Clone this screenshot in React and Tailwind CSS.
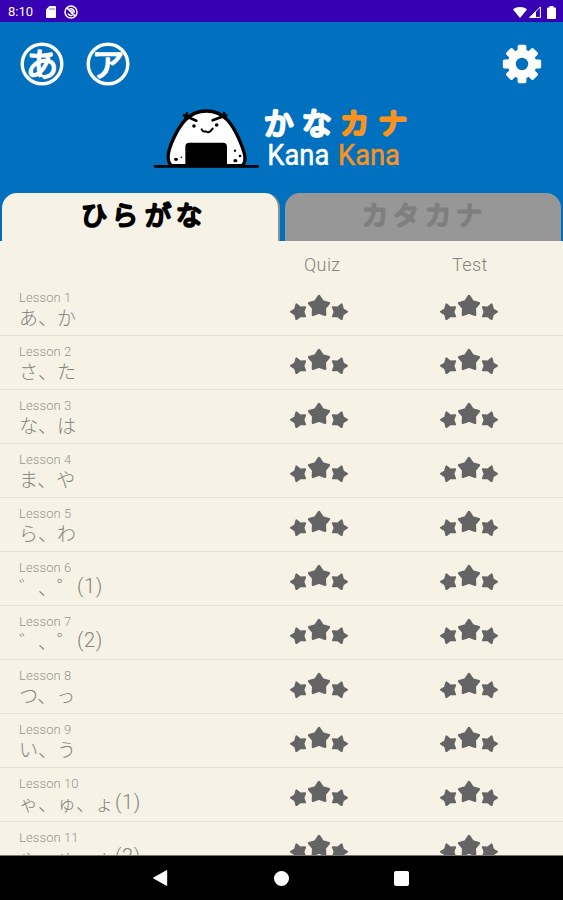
import React, { useState } from 'react';
import clsx from 'clsx';

const lessons = [
  { id: 1, kana: 'あ、か' },
  { id: 2, kana: 'さ、た' },
  { id: 3, kana: 'な、は' },
  { id: 4, kana: 'ま、や' },
  { id: 5, kana: 'ら、わ' },
  { id: 6, kana: '゛、゜', part: '(1)' },
  { id: 7, kana: '゛、゜', part: '(2)' },
  { id: 8, kana: 'つ、っ' },
  { id: 9, kana: 'い、う' },
  { id: 10, kana: 'ゃ、ゅ、ょ', part: '(1)' },
  { id: 11, kana: 'ゃ、ゅ、ょ', part: '(2)' },
];

// Kana with a round brush look: a thin glyph plus a round-joined stroke
const BrushText = ({ chars, xs, y, size, stroke, color }) => (
  <text
    x={xs.join(' ')}
    y={y}
    fontSize={size}
    fill={color}
    stroke={color}
    strokeWidth={stroke}
    strokeLinejoin="round"
    strokeLinecap="round"
    textAnchor="middle"
    className="font-['Noto_Sans_CJK_JP',sans-serif] font-light"
  >
    {chars}
  </text>
);

const StatusBar = () => (
  <div className="flex h-[22px] shrink-0 items-center bg-[#3700b3] pr-[7px] pl-2 text-white">
    <span className="w-[38px] pt-[2px] font-['Roboto',sans-serif] text-[13px] leading-5">8:10</span>
    <svg width="10" height="12" viewBox="0 0 10 12" className="mt-[2px]">
      <path d="M3.5 0H9a1 1 0 0 1 1 1v10a1 1 0 0 1-1 1H1a1 1 0 0 1-1-1V3.5z" fill="currentColor" />
      <path d="M4 2v2M6 2v2M8 2v2" stroke="#3700b3" strokeWidth="0.6" />
    </svg>
    <svg width="14" height="14" viewBox="0 0 14 14" className="mt-px ml-2" fill="none" stroke="currentColor">
      <circle cx="7" cy="7" r="6" strokeWidth="1.5" />
      <path d="M3 3l8 8M4 8.5a3.4 3.4 0 0 0 4.5 1.7M5.5 4a3.4 3.4 0 0 1 4.6 4" strokeWidth="1.6" />
      <path d="M6 5.5l3 .5-1 2.5z" strokeWidth="1" />
    </svg>
    <div className="ml-auto flex items-center pt-[2px]">
      <svg width="14" height="11" viewBox="0 0 14 11">
        <path d="M7 11L0 2.4C4 -.8 10 -.8 14 2.4z" fill="currentColor" />
      </svg>
      <svg width="12" height="12" viewBox="0 0 12 12" className="ml-[2px]">
        <path d="M11.4 .9V11.4H.9z" fill="none" stroke="currentColor" strokeWidth="1" />
        <path d="M0 12L7 5v7z" fill="currentColor" />
      </svg>
      <svg width="9" height="13" viewBox="0 0 9 13" className="ml-[6px]">
        <path d="M2.5 0h4v1.4H8a1 1 0 0 1 1 1V12a1 1 0 0 1-1 1H1a1 1 0 0 1-1-1V2.4a1 1 0 0 1 1-1h1.5z" fill="currentColor" />
      </svg>
    </div>
  </div>
);

const KanaButton = ({ char }) => (
  <button type="button">
    <svg width="44" height="44" viewBox="0 0 44 44" className="overflow-visible">
      <circle cx="22" cy="22" r="19.8" fill="none" stroke="#fff" strokeWidth="3.4" />
      <BrushText chars={char} xs={[22]} y={34} size={32} stroke={2.6} color="#fff" />
    </svg>
  </button>
);

const GearIcon = () => (
  <svg width="40" height="40" viewBox="-20 -20 40 40" fill="#fff">
    {[0, 45, 90, 135].map((angle) => (
      <rect key={angle} x="-4.4" y="-19.2" width="8.8" height="38.4" rx="1.6" transform={`rotate(${angle})`} />
    ))}
    <circle r="14.4" />
    <circle r="6.2" fill="#0070bf" />
  </svg>
);

const Logo = () => (
  <svg width="275" height="85" viewBox="0 0 825 255" className="ml-[145px]">
    {/* Onigiri */}
    <path
      d="M80 212C62 198 70 164 86 130C104 91 130 48 184 48C238 48 263 90 281 130C297 166 309 198 291 212Z"
      fill="#fff"
      stroke="#000"
      strokeWidth="10"
      strokeLinejoin="round"
    />
    <path d="M30 214H338" stroke="#000" strokeWidth="8" strokeLinecap="round" />
    <path d="M121 214V155Q121 143 133 143H234Q246 143 246 155V214Z" />
    <g fill="none" stroke="#000" strokeLinecap="round">
      <path d="M117 61L154 77M126 55L121 69" strokeWidth="8" />
      <path d="M203 76L244 61M237 54L241 68" strokeWidth="8" />
      <path d="M170 103Q174 112 182 109Q192 117 203 101" strokeWidth="6" />
    </g>
    <circle cx="147" cy="93" r="5.5" />
    <circle cx="215" cy="90" r="5.5" />
    <ellipse cx="93" cy="193" rx="6" ry="5" />
    <circle cx="109" cy="187" r="2.5" />
    <circle cx="270" cy="167" r="3.5" />
    <circle cx="285" cy="183" r="4" />
    <ellipse cx="271" cy="197" rx="6" ry="5" />

    {/* Name */}
    <BrushText chars="かな" xs={[401, 515]} y={118} size={88} stroke={11} color="#fff" />
    <BrushText chars="カナ" xs={[629, 743]} y={118} size={86} stroke={12} color="#f7931e" />
    <g fontSize="88" className="font-['Roboto',sans-serif]">
      <text x="367" y="211" textLength="186" lengthAdjust="spacingAndGlyphs" fill="#fff" stroke="#fff" strokeWidth="1.5">Kana</text>
      <text x="579" y="211" textLength="186" lengthAdjust="spacingAndGlyphs" fill="#f7931e" stroke="#f7931e" strokeWidth="1.5">Kana</text>
    </g>
  </svg>
);

const Tab = ({ label, xs, active, onClick }) => (
  <button
    type="button"
    onClick={onClick}
    className={clsx(
      'flex h-12 rounded-t-[15px]',
      active ? 'w-[278px] border-r-2 border-[#8a9290] bg-[#f6f3e6]' : 'w-[276px] bg-[#979797]'
    )}
  >
    <svg width="276" height="48" viewBox="0 0 276 48">
      <BrushText chars={label} xs={xs} y={32} size={26} stroke={3} color={active ? '#000' : '#7f7f7f'} />
    </svg>
  </button>
);

const star = 'M0-10.2L3.6-4.8L9.7-3.1L5.7 1.9L6 8.3L0 6L-6 8.3L-5.7 1.9L-9.7-3.1L-3.6-4.8Z';

const Stars = () => (
  <svg width="60" height="26" viewBox="0 0 60 26" fill="#646464" stroke="#646464" strokeLinejoin="round">
    <path d={star} transform="translate(9.8 17.8) rotate(-18) scale(.78)" strokeWidth="2.2" />
    <path d={star} transform="translate(50.2 17.8) rotate(18) scale(.78)" strokeWidth="2.2" />
    <path d={star} transform="translate(30 12.4) scale(1.02)" strokeWidth="2.4" />
  </svg>
);

const LessonRow = ({ lesson }) => (
  <li className="flex h-[54px] shrink-0 border-b border-[#e3e0d5]">
    <div className="w-[289px] pt-[8px] pl-[19px]">
      <p className="font-['Roboto',sans-serif] text-[13px] leading-4 font-light tracking-[0.1px] text-[#96948b]">
        Lesson {lesson.id}
      </p>
      <p className="flex h-[22px] text-[19px] leading-[21px] text-[#85837b]">
        <span className="font-['Noto_Sans_CJK_JP',sans-serif] font-light">{lesson.kana}</span>
        {lesson.part && (
          <span className="pl-px font-['Roboto',sans-serif] text-[20px] font-light tracking-[0.6px]">{lesson.part}</span>
        )}
      </p>
    </div>
    <div className="w-[150px] pt-[12px]">
      <Stars />
    </div>
    <div className="pt-[12px]">
      <Stars />
    </div>
  </li>
);

const NavBar = () => (
  <nav className="flex h-11 shrink-0 items-center bg-black pl-[152px]">
    <svg width="16" height="18" viewBox="0 0 16 18" fill="#fff">
      <path d="M1.5 9L14.7 1.6V16.4z" stroke="#fff" strokeLinejoin="round" />
    </svg>
    <div className="ml-[106px] size-[15px] rounded-full bg-white" />
    <div className="ml-[105px] size-[15px] rounded-[2px] bg-white" />
  </nav>
);

const App = () => {
  const [tab, setTab] = useState('hiragana');

  return (
    <div className="flex h-[900px] w-[563px] flex-col overflow-hidden bg-[#f6f3e6]">
      <StatusBar />

      <header className="flex h-[219px] shrink-0 flex-col bg-[#0070bf]">
        <div className="flex h-[73px] shrink-0 items-center gap-[22px] pt-[11px] pr-[21px] pl-[19.5px]">
          <KanaButton char="あ" />
          <KanaButton char="ア" />
          <button type="button" className="ml-auto">
            <GearIcon />
          </button>
        </div>
        <Logo />
        <div className="mt-auto flex justify-between pr-[2px] pl-[2px]">
          <Tab label="ひらがな" xs={[92, 123, 156, 187]} active={tab === 'hiragana'} onClick={() => setTab('hiragana')} />
          <Tab label="カタカナ" xs={[90, 121, 153, 184]} active={tab === 'katakana'} onClick={() => setTab('katakana')} />
        </div>
      </header>

      <div className="flex h-[41px] shrink-0 items-center pt-[5px] pl-[304px] font-['Roboto',sans-serif] text-[18px] font-light tracking-[0.4px] text-[#85837b]">
        <span className="w-[148px]">Quiz</span>
        <span>Test</span>
      </div>

      <ul className="flex min-h-0 flex-1 flex-col overflow-hidden border-b border-[#77756e]">
        {lessons.map((lesson) => (
          <LessonRow key={lesson.id} lesson={lesson} />
        ))}
      </ul>

      <NavBar />
    </div>
  );
};

export default App;
